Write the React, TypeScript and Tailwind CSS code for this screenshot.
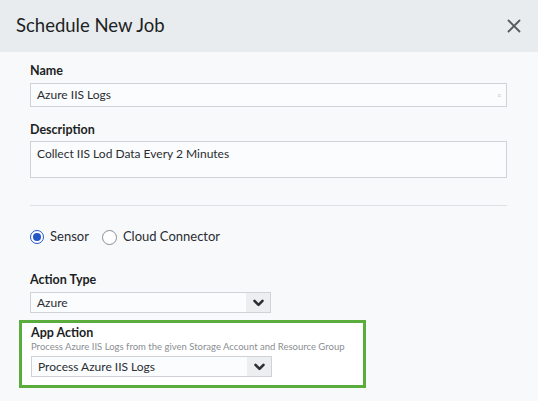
import React, { useState } from "react";

const FONT = { fontFamily: "Lato, 'Liberation Sans', sans-serif" };

const Chevron: React.FC = () => (
  <svg width="11" height="8" viewBox="0 0 11 8" fill="none">
    <path d="M1.5 1.8 L5.5 5.8 L9.5 1.8" stroke="#2b2f33" strokeWidth="2.6" strokeLinecap="round" strokeLinejoin="round" />
  </svg>
);

const FakeSelect: React.FC<{ value: string }> = ({ value }) => (
  <div className="flex h-[21px] w-[241px] border border-[#cfd3d7] bg-[#fbfcfd]">
    <div className="flex flex-1 items-center pl-[6px] text-[12px] text-[#2a2d31]">{value}</div>
    <div className="flex w-[24px] items-center justify-center bg-[#eceef0]">
      <Chevron />
    </div>
  </div>
);

const Radio: React.FC<{ checked: boolean; label: string; onClick: () => void }> = ({ checked, label, onClick }) => (
  <button onClick={onClick} className="flex items-center gap-[6px] cursor-pointer">
    {checked ? (
      <span className="flex h-[14px] w-[14px] items-center justify-center rounded-full border-[1.5px] border-[#2456c7] bg-white">
        <span className="h-[8px] w-[8px] rounded-full bg-[#2456c7]" />
      </span>
    ) : (
      <span className="h-[15px] w-[15px] rounded-full border border-[#8a8d91] bg-white" />
    )}
    <span className="text-[13px] text-[#2a2d31]">{label}</span>
  </button>
);

export default function App() {
  const [mode, setMode] = useState<"sensor" | "cloud">("sensor");

  return (
    <div className="h-[401px] w-[538px] overflow-hidden bg-[#f8f9fb]" style={FONT}>
      {/* header */}
      <div className="flex h-[52px] items-center justify-between bg-[#e9ecef] pl-[16px] pr-[17px]">
        <h1 className="text-[18.5px] text-[#1c1f23]">Schedule New Job</h1>
        <svg width="14" height="14" viewBox="0 0 14 14">
          <path d="M1.5 1.5 L12.5 12.5 M12.5 1.5 L1.5 12.5" stroke="#555a5f" strokeWidth="1.8" strokeLinecap="round" />
        </svg>
      </div>

      <div className="px-[30px] pt-[11px]">
        <div className="mb-[4px] text-[12.5px] font-bold leading-[16px] text-[#1c1f23]">Name</div>
        <div className="flex h-[24px] w-[477px] items-center justify-between border border-[#cfd3d7] bg-[#fbfcfd] pl-[6px] pr-[5px]">
          <span className="text-[12px] text-[#2a2d31]">Azure IIS Logs</span>
          <span className="text-[7px] leading-none text-[#c6c9cc]">≡</span>
        </div>

        <div className="mb-[3px] mt-[15px] text-[12.5px] font-bold leading-[16px] text-[#1c1f23]">Description</div>
        <div className="h-[37px] w-[477px] border border-[#cfd3d7] bg-[#fbfcfd] px-[6px] pt-[3px] text-[12px] text-[#2a2d31]">
          Collect IIS Lod Data Every 2 Minutes
        </div>

        <div className="mt-[27px] w-[477px] border-t border-[#dfe2e5]" />

        <div className="mt-[23px] flex h-[16px] items-center gap-[13px]">
          <Radio checked={mode === "sensor"} label="Sensor" onClick={() => setMode("sensor")} />
          <Radio checked={mode === "cloud"} label="Cloud Connector" onClick={() => setMode("cloud")} />
        </div>

        <div className="mb-[4px] mt-[27px] text-[12.5px] font-bold leading-[16px] text-[#1c1f23]">Action Type</div>
        <FakeSelect value="Azure" />

        {/* highlighted app action */}
        <div className="-ml-[11px] mt-[7px] w-[347px] border-[3px] border-[#5aad3c] bg-white pb-[8px] pl-[9px] pt-[2px]">
          <div className="text-[12.5px] font-bold leading-[15px] text-[#1c1f23]">App Action</div>
          <div className="whitespace-nowrap text-[9.5px] leading-[13px] text-[#8a8e93]">
            Process Azure IIS Logs from the given Storage Account and Resource Group
          </div>
          <div className="mt-[3px]">
            <FakeSelect value="Process Azure IIS Logs" />
          </div>
        </div>
      </div>
    </div>
  );
}
